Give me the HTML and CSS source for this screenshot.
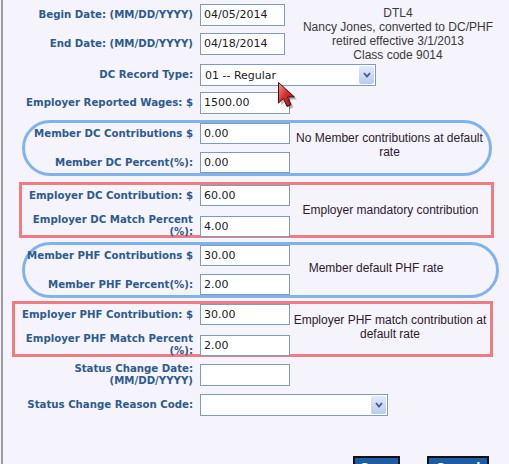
FILE: index.html
```html
<!DOCTYPE html>
<html lang="en">
<head>
<meta charset="utf-8">
<title>DC Record</title>
<link rel="stylesheet" href="styles.css">
</head>
<body>
<div class="page">
  <div class="top">
    <div class="top-fields">
      <div class="row">
        <span class="lbl">Begin Date: (MM/DD/YYYY)</span>
        <span class="field field-date">04/05/2014</span>
      </div>
      <div class="row">
        <span class="lbl">End Date: (MM/DD/YYYY)</span>
        <span class="field field-date">04/18/2014</span>
      </div>
    </div>
    <div class="top-note">DTL4<br>Nancy Jones, converted to DC/PHF<br>retired effective 3/1/2013<br>Class code 9014</div>
  </div>

  <div class="row row-type">
    <span class="lbl">DC Record Type:</span>
    <span class="select select-type"><span>01 -- Regular</span><span class="select-btn"><svg width="8" height="6" viewBox="0 0 8 6"><polyline points="1,1 4,4.5 7,1" fill="none" stroke="#4a5c84" stroke-width="1.8"/></svg></span></span>
  </div>

  <div class="row row-wages">
    <span class="lbl">Employer Reported Wages: $</span>
    <span class="field">1500.00</span>
  </div>

  <div class="group group-blue g-dc-member">
    <div class="group-fields">
      <div class="row">
        <span class="lbl">Member DC Contributions $</span>
        <span class="field">0.00</span>
      </div>
      <div class="row">
        <span class="lbl">Member DC Percent(%):</span>
        <span class="field">0.00</span>
      </div>
    </div>
    <div class="group-note note-dc-member">No Member contributions at default<br>rate</div>
  </div>

  <div class="group group-red g-dc-employer">
    <div class="group-fields">
      <div class="row">
        <span class="lbl">Employer DC Contribution: $</span>
        <span class="field">60.00</span>
      </div>
      <div class="row">
        <span class="lbl">Employer DC Match Percent<br>(%):</span>
        <span class="field">4.00</span>
      </div>
    </div>
    <div class="group-note">Employer mandatory contribution</div>
  </div>

  <div class="group group-blue g-phf-member">
    <div class="group-fields">
      <div class="row">
        <span class="lbl">Member PHF Contributions $</span>
        <span class="field">30.00</span>
      </div>
      <div class="row">
        <span class="lbl">Member PHF Percent(%):</span>
        <span class="field">2.00</span>
      </div>
    </div>
    <div class="group-note note-phf-member">Member default PHF rate</div>
  </div>

  <div class="group group-red g-phf-employer">
    <div class="group-fields">
      <div class="row">
        <span class="lbl">Employer PHF Contribution: $</span>
        <span class="field">30.00</span>
      </div>
      <div class="row">
        <span class="lbl">Employer PHF Match Percent<br>(%):</span>
        <span class="field">2.00</span>
      </div>
    </div>
    <div class="group-note note-phf-employer">Employer PHF match contribution at<br>default rate</div>
  </div>

  <div class="row row-status-date">
    <span class="lbl">Status Change Date:<br>(MM/DD/YYYY)</span>
    <span class="field"></span>
  </div>

  <div class="row row-status-code">
    <span class="lbl">Status Change Reason Code:</span>
    <span class="select select-reason"><span></span><span class="select-btn"><svg width="8" height="6" viewBox="0 0 8 6"><polyline points="1,1 4,4.5 7,1" fill="none" stroke="#4a5c84" stroke-width="1.8"/></svg></span></span>
  </div>

  <div class="actions">
    <span class="btn btn-save">Save</span>
    <span class="btn btn-cancel">Cancel</span>
  </div>

  <svg class="cursor" width="20" height="28" viewBox="0 0 20 28">
    <defs>
      <linearGradient id="cg" x1="0" y1="0" x2="1" y2="1">
        <stop offset="0" stop-color="#f0a0a0"/>
        <stop offset="0.45" stop-color="#d83030"/>
        <stop offset="1" stop-color="#8e1010"/>
      </linearGradient>
    </defs>
    <path d="M2.5,2.5 L2.5,23 L7.5,18.5 L11,26.5 L15,24.8 L11.5,17 L18.5,17 Z" fill="#000" opacity="0.25" transform="translate(1.5,1.5)"/>
    <path d="M1.5,1.5 L1.5,22 L6.5,17.5 L10,25.5 L14,23.8 L10.5,16 L17.5,16 Z" fill="url(#cg)" stroke="#4a0c0c" stroke-width="1" stroke-linejoin="round"/>
  </svg>
</div>
</body>
</html>
```

FILE: styles.css
```css
html, body {
  margin: 0;
  padding: 0;
  height: 464px;
  overflow: hidden;
  background: #f5f3fb;
}

.page {
  position: relative;
  margin-left: 1px;
  border-left: 2px solid #9c9c9c;
  height: 464px;
  box-sizing: border-box;
  padding-top: 4px;
  font-family: "DejaVu Sans", Verdana, sans-serif;
}

.row {
  display: flex;
  align-items: center;
  gap: 7px;
}

.lbl {
  flex: none;
  width: 190px;
  text-align: right;
  font-weight: bold;
  font-size: 10.2px;
  line-height: 12px;
  color: #2e5b8d;
  white-space: nowrap;
}

.field {
  flex: none;
  box-sizing: border-box;
  width: 90px;
  height: 22px;
  border: 1px solid #7f9db9;
  background: #fff;
  font-size: 11px;
  line-height: 20px;
  padding-left: 3px;
  color: #1c1c24;
}

.field-date {
  width: 85px;
}

.top {
  display: flex;
  align-items: flex-start;
}

.top-fields {
  display: flex;
  flex-direction: column;
  gap: 7px;
}

.top-note {
  margin-left: 5px;
  margin-top: 2px;
  width: 216px;
  text-align: center;
  font-family: "Liberation Sans", Arial, sans-serif;
  font-size: 12px;
  line-height: 14px;
  color: #3a3a3a;
  white-space: nowrap;
}

.select {
  flex: none;
  box-sizing: border-box;
  height: 22px;
  border: 1px solid #7f9db9;
  background: #fff;
  display: flex;
  align-items: center;
  justify-content: space-between;
  padding: 0 1px 0 4px;
  font-size: 11px;
  color: #1c1c24;
}

.select-type {
  width: 176px;
}

.select-reason {
  width: 188px;
}

.select-btn {
  width: 15px;
  height: 18px;
  border-radius: 2px;
  background: linear-gradient(#e2eafb, #b7cbf1);
  display: flex;
  align-items: center;
  justify-content: center;
}

.row-type {
  margin-top: 2px;
}

.row-wages {
  margin-top: 6px;
}

.group {
  display: flex;
  box-sizing: border-box;
  height: 56px;
  border: 3px solid;
  margin-left: calc(var(--gl) - 3px);
  margin-right: calc(509px - var(--gr));
}

.group .lbl {
  width: calc(190px - var(--gl));
}

.group .field {
  height: 21px;
  line-height: 19px;
}

.group-fields {
  display: flex;
  flex-direction: column;
  gap: 8px;
}

.group-note {
  flex: 1;
  display: flex;
  align-items: center;
  justify-content: center;
  text-align: center;
  font-family: "Liberation Sans", Arial, sans-serif;
  font-size: 12px;
  line-height: 14px;
  color: #2d1a30;
  white-space: nowrap;
}

.group-blue {
  border-color: #80b3ee;
  border-radius: 28px;
}

.group-red {
  border-color: #ef7c82;
}

.g-dc-member {
  --gl: 22px;
  --gr: 492px;
  margin-top: 6px;
}

.g-dc-employer {
  --gl: 19px;
  --gr: 494px;
  margin-top: 6px;
}

.g-phf-member {
  --gl: 22px;
  --gr: 499px;
  margin-top: 4px;
}

.g-phf-employer {
  --gl: 12px;
  --gr: 493px;
  margin-top: 3px;
}

.note-dc-member {
  padding-bottom: 6px;
}

.note-phf-member {
  padding-right: 34px;
  padding-bottom: 4px;
}

.note-phf-employer {
  padding-bottom: 4px;
}

.row-status-date {
  margin-top: 6px;
}

.row-status-code {
  margin-top: 7px;
}

.actions {
  display: flex;
  justify-content: flex-end;
  gap: 27px;
  margin-top: 40px;
  margin-right: 20px;
}

.btn {
  box-sizing: border-box;
  height: 24px;
  border: 2px solid #111;
  background: #1e5ca3;
  color: #fff;
  font-weight: bold;
  font-size: 12px;
  line-height: 20px;
  text-align: center;
}

.btn-save {
  width: 47px;
}

.btn-cancel {
  width: 62px;
}

.cursor {
  position: absolute;
  left: 274px;
  top: 81px;
}
```
